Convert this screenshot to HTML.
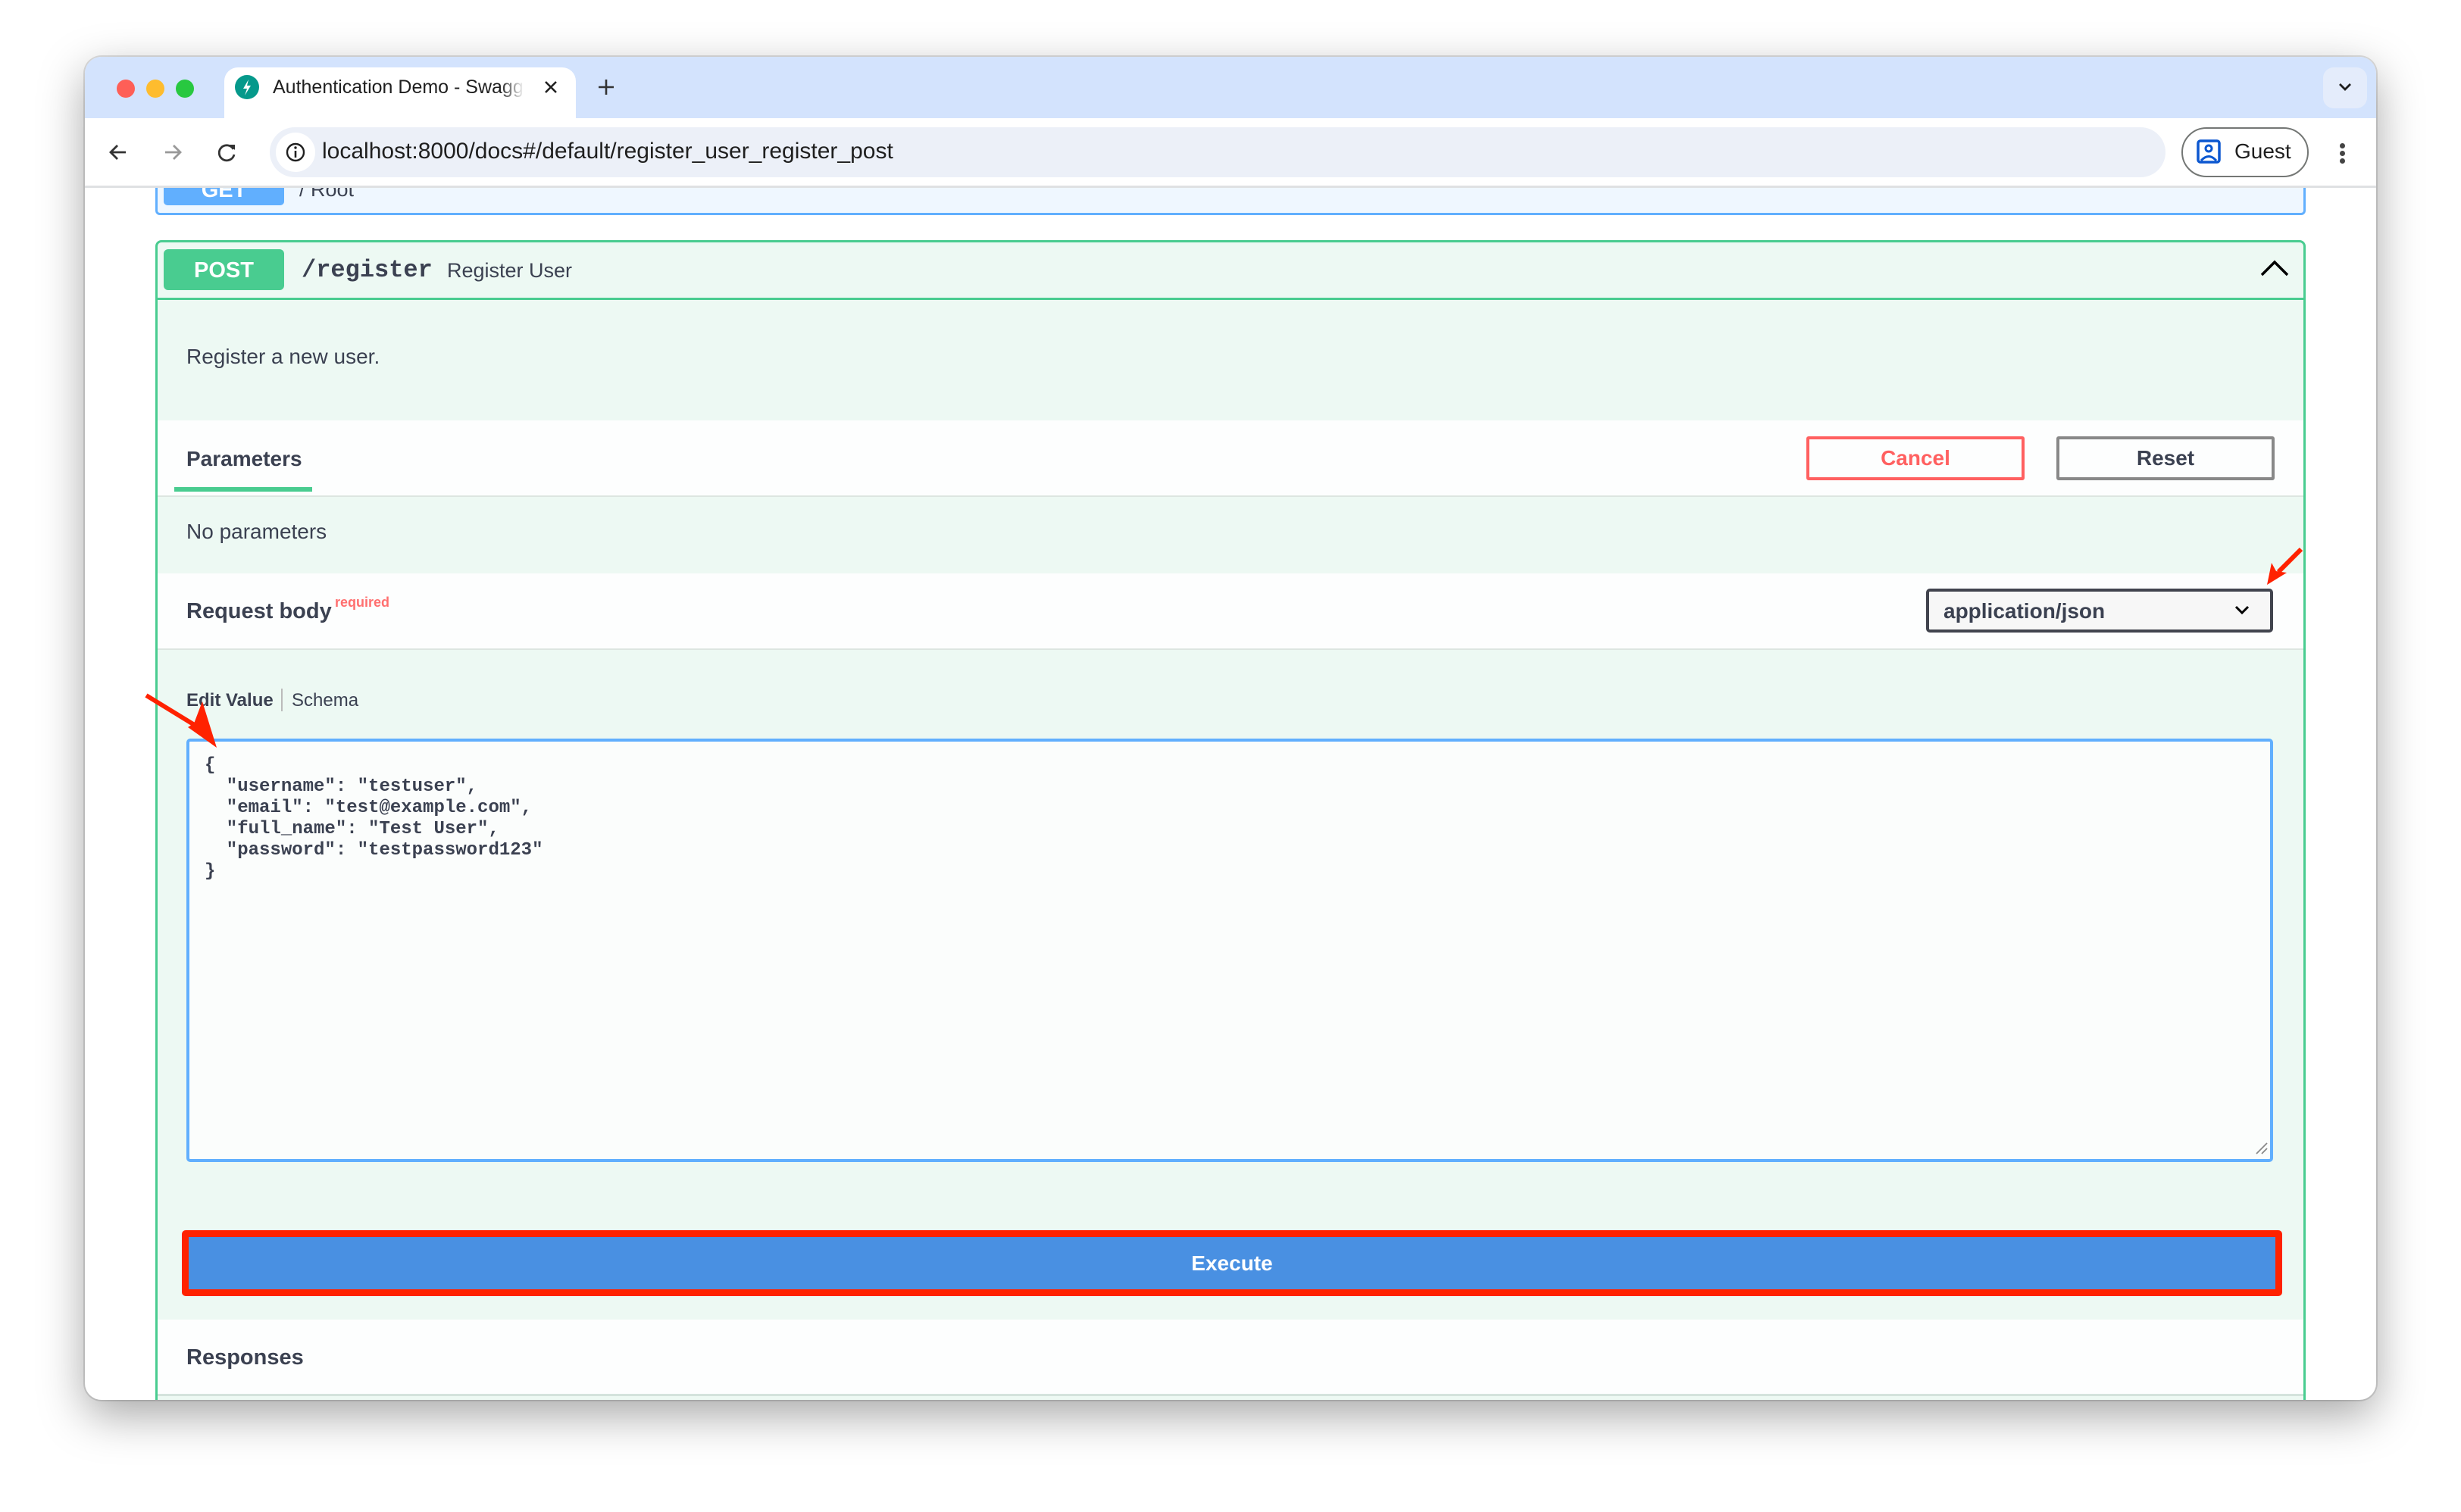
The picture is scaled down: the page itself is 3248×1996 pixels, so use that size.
<!DOCTYPE html>
<html><head><meta charset="utf-8"><style>
*{margin:0;padding:0;box-sizing:border-box}
body{width:3248px;height:1996px;background:#fff;position:relative;overflow:hidden;font-family:"Liberation Sans",Arial,sans-serif;color:#3b4151}
.abs{position:absolute}
#win{position:absolute;left:112px;top:75px;width:3024px;height:1773px;border-radius:22px;overflow:hidden;background:#fff;box-shadow:0 20px 60px rgba(0,0,0,.35),0 0 0 2px rgba(0,0,0,.12)}
.t{white-space:nowrap;position:absolute}
.b{font-weight:bold}
.mono{font-family:"Liberation Mono","DejaVu Sans Mono",monospace}
</style></head><body>
<div id="win">
 <!-- page content GET block (partially under toolbar) -->
 <div class="abs" style="left:93px;top:140px;width:2838px;height:69px;background:#eff7ff;border:3px solid #61affe;border-radius:6px"></div>
 <div class="abs" style="left:104px;top:150px;width:159px;height:46px;background:#61affe;border-radius:5px"></div>
 <div class="t b" style="left:104px;top:160px;width:159px;text-align:center;font-size:29px;color:#fff">GET</div>
 <div class="t" style="left:283px;top:160px;font-size:27px;color:#3b4151">/ Root</div>
 <!-- tab strip -->
 <div class="abs" style="left:0;top:0;width:3024px;height:81px;background:#d3e3fd"></div>
 <div class="abs" style="left:42px;top:30px;width:24px;height:24px;border-radius:50%;background:#fe5f57"></div>
 <div class="abs" style="left:81px;top:30px;width:24px;height:24px;border-radius:50%;background:#febc2e"></div>
 <div class="abs" style="left:120px;top:30px;width:24px;height:24px;border-radius:50%;background:#28c840"></div>
 <div class="abs" style="left:184px;top:14px;width:464px;height:70px;background:#fff;border-radius:18px 18px 0 0"></div>
 <div class="abs" style="left:198px;top:24px;width:32px;height:32px;border-radius:50%;background:#05998b"></div>
 <svg class="abs" style="left:198px;top:24px" width="32" height="32"><path d="M18 6 L11 18 H16 L13 27 L21 14 H16 Z" fill="#fff"/></svg>
 <div class="t" style="left:248px;top:26px;font-size:25px;color:#1f1f1f;width:330px;overflow:hidden">Authentication Demo - Swagger UI</div>
 <div class="t" style="left:548px;top:22px;width:32px;height:36px;background:linear-gradient(90deg,rgba(255,255,255,0),#fff)"></div>
 <svg class="abs" style="left:605px;top:30px" width="20" height="20"><path d="M3 3 L17 17 M17 3 L3 17" stroke="#1f1f1f" stroke-width="2.6"/></svg>
 <svg class="abs" style="left:676px;top:28px" width="24" height="24"><path d="M12 2 V22 M2 12 H22" stroke="#333" stroke-width="2.6"/></svg>
 <div class="abs" style="left:2954px;top:14px;width:58px;height:54px;border-radius:14px;background:#e4ecfb"></div>
 <svg class="abs" style="left:2973px;top:32px" width="20" height="16"><path d="M3 4 L10 11 L17 4" stroke="#1f1f1f" stroke-width="2.8" fill="none"/></svg>
 <!-- toolbar -->
 <div class="abs" style="left:0;top:81px;width:3024px;height:92px;background:#fff;border-bottom:3px solid #dfe1e3"></div>
 <svg class="abs" style="left:28px;top:110px" width="32" height="32"><path d="M26 16 H6 M15 7 L6 16 L15 25" stroke="#333" stroke-width="2.8" fill="none"/></svg>
 <svg class="abs" style="left:100px;top:110px" width="32" height="32"><path d="M6 16 H26 M17 7 L26 16 L17 25" stroke="#999" stroke-width="2.8" fill="none"/></svg>
 <svg class="abs" style="left:172px;top:110px" width="32" height="32"><path d="M24 12 A10 10 0 1 0 25 19" stroke="#333" stroke-width="2.8" fill="none"/><path d="M19 6 L26 6 L26 13 Z" fill="#333"/></svg>
 <div class="abs" style="left:244px;top:93px;width:2502px;height:66px;border-radius:33px;background:#ecf0f8"></div>
 <div class="abs" style="left:252px;top:100px;width:52px;height:52px;border-radius:50%;background:#fff"></div>
 <svg class="abs" style="left:262px;top:110px" width="32" height="32"><circle cx="16" cy="16" r="11" stroke="#1f1f1f" stroke-width="2.4" fill="none"/><path d="M16 14 V23" stroke="#1f1f1f" stroke-width="2.6"/><circle cx="16" cy="10" r="1.7" fill="#1f1f1f"/></svg>
 <div class="t" style="left:313px;top:108px;font-size:30px;color:#1f1f1f">localhost:8000/docs#/default/register_user_register_post</div>
 <div class="abs" style="left:2767px;top:93px;width:168px;height:66px;border-radius:33px;border:2px solid #747775"></div>
 <svg class="abs" style="left:2786px;top:108px" width="34" height="34"><rect x="3" y="3" width="28" height="28" rx="3" stroke="#0b57d0" stroke-width="3.5" fill="none"/><circle cx="17" cy="13" r="4" stroke="#0b57d0" stroke-width="3" fill="none"/><path d="M7 29 Q17 18 27 29" stroke="#0b57d0" stroke-width="3" fill="none"/></svg>
 <div class="t" style="left:2837px;top:109px;font-size:28px;color:#1f1f1f">Guest</div>
 <div class="abs" style="left:2976px;top:114px;width:7px;height:7px;border-radius:50%;background:#444"></div>
 <div class="abs" style="left:2976px;top:124px;width:7px;height:7px;border-radius:50%;background:#444"></div>
 <div class="abs" style="left:2976px;top:134px;width:7px;height:7px;border-radius:50%;background:#444"></div>

 <!-- POST block -->
 <div class="abs" style="left:93px;top:242px;width:2838px;height:1600px;background:#edf9f3;border:3px solid #49cc90;border-radius:8px"></div>
 <div class="abs" style="left:96px;top:318px;width:2832px;height:3px;background:#49cc90"></div>
 <div class="abs" style="left:104px;top:254px;width:159px;height:54px;background:#49cc90;border-radius:6px"></div>
 <div class="t b" style="left:104px;top:266px;width:159px;text-align:center;font-size:29px;color:#fff">POST</div>
 <div class="t b mono" style="left:286px;top:263px;font-size:32px;color:#3b4151">/register</div>
 <div class="t" style="left:478px;top:267px;font-size:27px;color:#3b4151">Register User</div>
 <svg class="abs" style="left:2870px;top:266px" width="40" height="26"><path d="M3 22 L20 5 L37 22" stroke="#000" stroke-width="3.5" fill="none"/></svg>
 <div class="t" style="left:134px;top:380px;font-size:28px">Register a new user.</div>
 <!-- parameters -->
 <div class="abs" style="left:96px;top:480px;width:2832px;height:101px;background:rgba(255,255,255,.85);border-bottom:2px solid #dde6e1"></div>
 <div class="t b" style="left:134px;top:515px;font-size:28px">Parameters</div>
 <div class="abs" style="left:118px;top:568px;width:182px;height:6px;background:#49cc90"></div>
 <div class="abs" style="left:2272px;top:501px;width:288px;height:58px;border:4px solid #ff6060;border-radius:3px"></div>
 <div class="t b" style="left:2272px;top:514px;width:288px;text-align:center;font-size:28px;color:#ff6060">Cancel</div>
 <div class="abs" style="left:2602px;top:501px;width:288px;height:58px;border:4px solid #888;border-radius:3px"></div>
 <div class="t b" style="left:2602px;top:514px;width:288px;text-align:center;font-size:28px;color:#3b4151">Reset</div>
 <div class="t" style="left:134px;top:611px;font-size:28px">No parameters</div>
 <!-- request body -->
 <div class="abs" style="left:96px;top:682px;width:2832px;height:101px;background:rgba(255,255,255,.85);border-bottom:2px solid #dde6e1"></div>
 <div class="t b" style="left:134px;top:716px;font-size:29px">Request body</div>
 <div class="t b" style="left:330px;top:710px;font-size:18px;color:#ff6f6f">required</div>
 <div class="abs" style="left:2430px;top:702px;width:458px;height:58px;border:4px solid #41444e;border-radius:5px;background:#f7f7f7"></div>
 <div class="t b" style="left:2453px;top:716px;font-size:28px">application/json</div>
 <svg class="abs" style="left:2836px;top:722px" width="22" height="16"><path d="M3 4 L11 12 L19 4" stroke="#000" stroke-width="3" fill="none"/></svg>
 <!-- edit value -->
 <div class="t b" style="left:134px;top:836px;font-size:24px">Edit Value</div>
 <div class="abs" style="left:259px;top:834px;width:2px;height:30px;background:#bbb"></div>
 <div class="t" style="left:273px;top:836px;font-size:24px">Schema</div>
 <div class="abs" style="left:134px;top:900px;width:2754px;height:559px;border:4px solid #61affe;border-radius:5px;background:#fbfdfc"></div>
 <pre class="abs b mono" style="left:158px;top:922px;font-size:24px;line-height:28px;color:#3b4151">{
  "username": "testuser",
  "email": "test@example.com",
  "full_name": "Test User",
  "password": "testpassword123"
}</pre>
 <svg class="abs" style="left:2862px;top:1430px" width="20" height="20"><path d="M4 18 L18 4 M11 18 L18 11" stroke="#888" stroke-width="1.8"/></svg>
 <!-- execute -->
 <div class="abs" style="left:128px;top:1549px;width:2772px;height:87px;border:9px solid #ff2200;border-radius:5px;background:#4990e2"></div>
 <div class="t b" style="left:128px;top:1577px;width:2772px;text-align:center;font-size:28px;color:#fff">Execute</div>
 <!-- responses -->
 <div class="abs" style="left:96px;top:1667px;width:2832px;height:101px;background:rgba(255,255,255,.85);border-bottom:3px solid #d4e3dc"></div>
 <div class="t b" style="left:134px;top:1701px;font-size:29px">Responses</div>
 <!-- arrows -->
 <svg class="abs" style="left:0;top:0" width="3024" height="1773">
  <path d="M81 843 L156 889" stroke="#ff2200" stroke-width="6"/>
  <path d="M174 912 L136 885 L144 880 L155 851 Z" fill="#ff2200"/>
  <path d="M2925 650 L2895 680" stroke="#ff2200" stroke-width="6"/>
  <path d="M2880 697 L2886 668 L2892 679 L2906 681 Z" fill="#ff2200"/>
 </svg>
</div>
</body></html>
